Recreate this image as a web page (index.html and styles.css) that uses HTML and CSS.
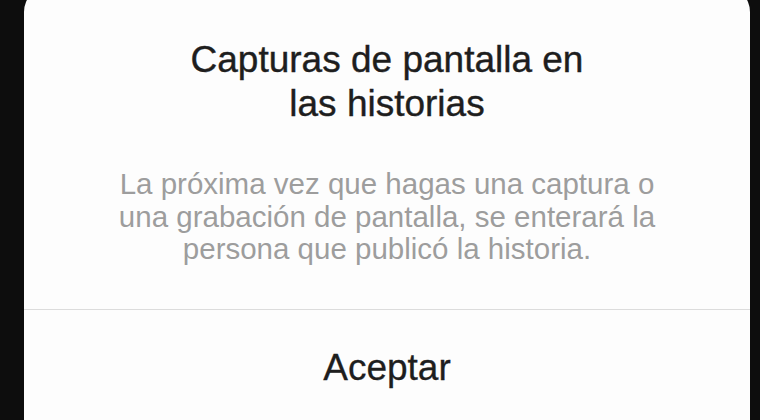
FILE: index.html
```html
<!DOCTYPE html>
<html lang="es">
<head>
<meta charset="utf-8">
<link rel="stylesheet" href="styles.css">
</head>
<body>
<div class="dialog">
  <div class="content">
    <h1 class="title">Capturas de pantalla en<br>las historias</h1>
    <p class="message">La próxima vez que hagas una captura o<br>una grabación de pantalla, se enterará la<br>persona que publicó la historia.</p>
  </div>
  <div class="divider"></div>
  <div class="action">Aceptar</div>
</div>
</body>
</html>
```

FILE: styles.css
```css
html, body {
  margin: 0;
  padding: 0;
  height: 100%;
  overflow: hidden;
}
body {
  background: #0d0d0d;
  font-family: "Liberation Sans", Arial, sans-serif;
}
.dialog {
  margin: -14px 0 0 24px;
  width: 726px;
  height: 434px;
  background: #fdfdfd;
  border-radius: 26px 26px 0 0;
  display: flex;
  flex-direction: column;
  align-items: stretch;
}
.content {
  padding-top: 52px;
  text-align: center;
}
.title {
  margin: 0;
  font-size: 37px;
  font-weight: normal;
  line-height: 44px;
  color: #1e1e1e;
  -webkit-text-stroke: 0.4px #1e1e1e;
}
.message {
  margin: 42px 0 0;
  font-size: 29.5px;
  line-height: 32.5px;
  color: #9d9d9d;
}
.divider {
  margin-top: 43px;
  height: 1px;
  background: #dcdcdc;
}
.action {
  padding-top: 32px;
  text-align: center;
  font-size: 37px;
  line-height: 52px;
  color: #1e1e1e;
  -webkit-text-stroke: 0.3px #1e1e1e;
}
```
